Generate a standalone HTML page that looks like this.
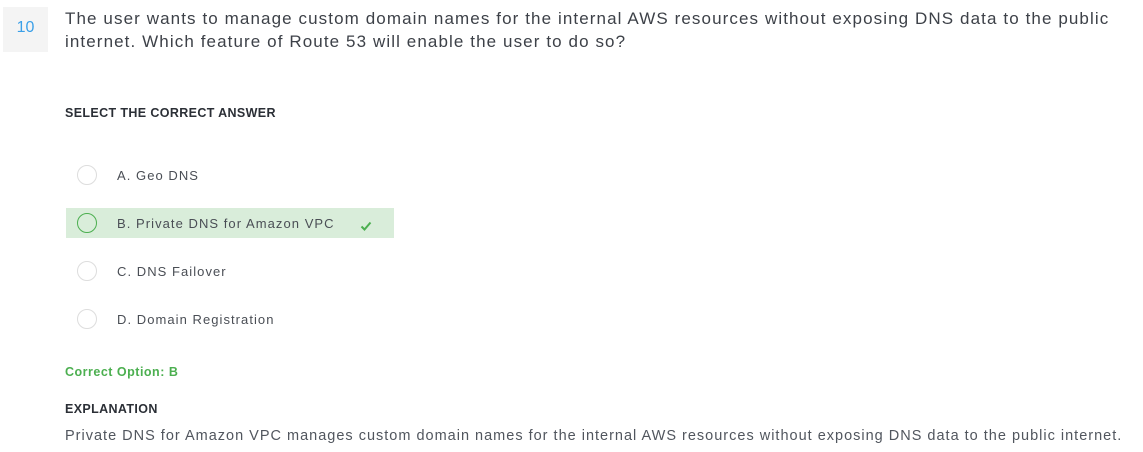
<!DOCTYPE html>
<html><head><style>
body{margin:0;width:1143px;height:452px;background:#fff;font-family:"Liberation Sans",sans-serif;color:#3d4148;position:relative;overflow:hidden}
.a{position:absolute;white-space:nowrap}
.num{left:3px;top:7px;width:45px;height:45px;background:#f4f4f4;color:#3ba0e8;font-size:16px;text-align:center;line-height:42px}
.q{left:65px;top:7px;font-size:17px;line-height:23px;letter-spacing:1.1px;color:#3d4148}
.h{font-weight:bold;font-size:12.5px;color:#2b2f36;letter-spacing:0.37px}
.opt{font-size:13px;color:#4a4e55;letter-spacing:1.05px}
.c{position:absolute;width:18px;height:18px;border:1px solid #ddd;border-radius:50%;left:77px}
</style></head><body>
<div class="a num">10</div>
<div class="a q">The user wants to manage custom domain names for the internal AWS resources without exposing DNS data to the public<br>internet. Which feature of Route 53 will enable the user to do so?</div>
<div class="a h" style="left:65px;top:106px">SELECT THE CORRECT ANSWER</div>
<div class="c" style="top:165px"></div><div class="a opt" style="left:117px;top:168px">A. Geo DNS</div>
<div class="a" style="left:66px;top:208px;width:328px;height:30px;background:#d9edda"></div>
<div class="c" style="top:213px;border-color:#4caf50"></div><div class="a opt" style="left:117px;top:216px">B. Private DNS for Amazon VPC</div>
<svg class="a" style="left:360px;top:221px" width="12" height="10" viewBox="0 0 12 10"><path d="M1.5 5.5 L4.5 8.5 L10.5 1.5" stroke="#4caf50" stroke-width="2" fill="none"/></svg>
<div class="c" style="top:261px"></div><div class="a opt" style="left:117px;top:264px">C. DNS Failover</div>
<div class="c" style="top:309px"></div><div class="a opt" style="left:117px;top:312px">D. Domain Registration</div>
<div class="a" style="left:65px;top:365px;font-size:12.5px;color:#4caf50;font-weight:bold;letter-spacing:0.5px">Correct Option: B</div>
<div class="a h" style="left:65px;top:402px">EXPLANATION</div>
<div class="a" style="left:65px;top:428px;font-size:14.5px;letter-spacing:1.0px;color:#51565e">Private DNS for Amazon VPC manages custom domain names for the internal AWS resources without exposing DNS data to the public internet.</div>
</body></html>
